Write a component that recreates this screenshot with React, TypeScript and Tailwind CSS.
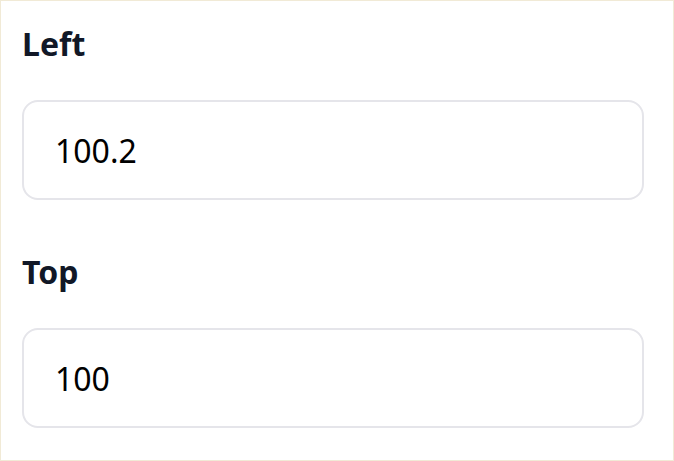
import React from 'react'

type Field = { id: string; label: string; value: string }

const fields: Field[] = [
  { id: 'left', label: 'Left', value: '100.2' },
  { id: 'top', label: 'Top', value: '100' },
]

export default function App() {
  return (
    <div
      className="w-[674px] h-[461px] border border-[#f1ead6] bg-white pt-[23px] pl-[21px] pr-[29px] pb-[32px] flex flex-col gap-[52px]"
      style={{ fontFamily: '"Noto Sans", "Open Sans", sans-serif' }}
    >
      {fields.map(f => (
        <div key={f.id} className="flex flex-col">
          <label htmlFor={f.id} className="h-10 leading-[40px] text-[32px] font-bold text-[#111827] mb-9">
            {f.label}
          </label>
          <input
            id={f.id}
            type="text"
            readOnly
            value={f.value}
            className="h-[100px] w-full rounded-2xl border-2 border-[#e5e5ea] pl-[31px] pr-4 text-[32px] text-black outline-none bg-white"
          />
        </div>
      ))}
    </div>
  )
}
